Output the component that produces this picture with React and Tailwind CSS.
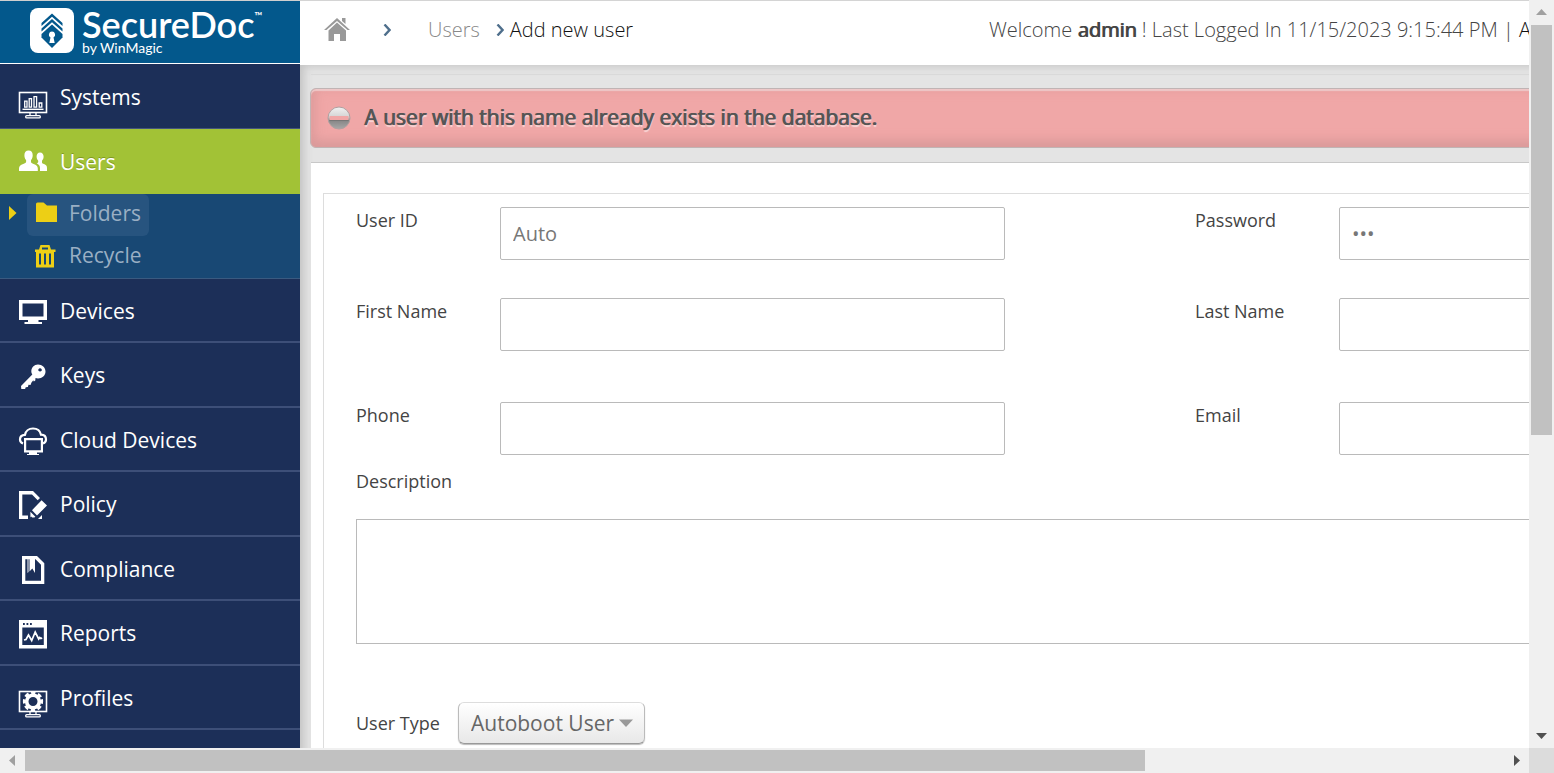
import React from "react";

const ink = { fill: "none", stroke: "#fff" };

function NavIcon({ children }) {
  return (
    <svg className="h-12 w-8 shrink-0" viewBox="0 0 32 48" fill="#fff" aria-hidden="true">
      {children}
    </svg>
  );
}

function MonitorThin() {
  return (
    <>
      <rect x="3.5" y="0.5" width="27" height="20" {...ink} strokeWidth="1.6" />
      <path d="M14 21v2.5M20 21v2.5" {...ink} strokeWidth="1.3" />
      <rect x="9.7" y="23.7" width="14.6" height="2.2" rx="1" {...ink} strokeWidth="1.3" />
    </>
  );
}

const icons = {
  systems: (
    <g transform="translate(0 20)">
      <MonitorThin />
      <path d="M6.5 17.3h21" {...ink} strokeWidth="1.4" />
      <path d="M8.7 15.2v-6h2.3v6zM13.2 15.2V6.7h2.3v8.500zM18 15.200V4.7h2.600v10.500zM23.200 15.200v-4.200h2.600v4.200z" {...ink} strokeWidth="1.3" />
    </g>
  ),
  users: (
    <path d="M12.600 12.500c2.800 0 4.100 1.900 4.100 4.700 0 2-.6 3.800-1.700 4.900v2c0 .8 1 1.200 2.600 1.900 2.800 1.200 4.200 2 4.200 4.500V33H3v-2.500c0-2.500 1.400-3.300 4.200-4.500 1.600-.7 2.900-1.100 2.900-1.900v-2c-1.100-1.100-1.700-2.900-1.700-4.900 0-2.800 1.400-4.700 4.200-4.700zM24 14.500c2.300 0 3.600 1.700 3.600 4.100 0 1.800-.6 3.200-1.600 4.100v1.700c0 .8.900 1.100 2 1.600 2.100 1 3 1.800 3 4V33h-7v-3c0-2.400-1.200-3.700-3.300-4.800.9-.5 1.500-.6 1.500-1.200v-1.300c-1-.9-1.600-2.300-1.600-4.100 0-2.400 1.200-4.100 3.400-4.100z" />
  ),
  devices: (
    <path fillRule="evenodd" d="M3 14h28v20h-8.500v2H26v2H8.500v-2H12v-2H3zM6.500 17.500v13h21v-13z" />
  ),
  keys: (
    <path fillRule="evenodd" d="M22 13.500c4.200 0 7.500 3 7.500 7s-3.300 7-7.500 7c-1 0-1.700-.1-2.500-.4l-.2 2.400-1.500 1-.5-1.200-1.800 2.200-1 2.600-2-.4-.6 2.300-2.200.3-.6 1.700H5.300L5 35l11.300-11.600c-.7-1-1-2-1-3 0-3.900 2.900-6.900 6.700-6.900zM24 17.300a1.800 1.600 0 1 0 .1 0z" />
  ),
  cloud: (
    <>
      <path d="M7 28.500c-1.900-.7-3-2-3-4 0-2.700 1.900-4.600 5-4.700.6-3.700 3.700-6.300 8-6.300s7.200 2.500 8 6.200c3.200.1 5 2 5 4.800 0 1.900-1.100 3.300-3 4" {...ink} strokeWidth="2.200" />
      <path fillRule="evenodd" d="M8 23h19v14.500h-6V39h2v1H11v-1h2v-1.500H8zM10.200 25.200v10.100h14.600V25.200z" />
    </>
  ),
  policy: (
    <>
      <path d="M3 12h14l7 7-2.300 2.300L16 15.500H6.300v21H12V40H3z" />
      <path d="M25.600 21.200 31 26.600 21 36.400l-5-5.200zM14.400 32.800l5 5-1.100.7h-2.200l-1-1.100-.7 1.200zM26 36v4h-4z" />
    </>
  ),
  compliance: (
    <>
      <path fillRule="evenodd" d="M6 12h15l7.300 7.300V40H6zM9.300 15.200v21.500H25V20.800l-5.500-5.600z" />
      <path d="M11.500 14v15l1-1V14zM13.500 14h5.500v15l-2.700-4.500-2.800 3z" />
    </>
  ),
  reports: (
    <>
      <path fillRule="evenodd" d="M3 12h28v28.500H3zM6.300 19.500V37H27.800V19.500zM7 15v2h1.800v-2zM10.500 15v2h1.800v-2zM14 15v2h1.800v-2z" />
      <path d="m8 32 2-.5 2.500-4.500 3.200 5.500 3.500-8.500 3.500 7 1-1.500 1.200 1 1.300-.5" {...ink} strokeWidth="1.700" />
    </>
  ),
  profiles: (
    <g transform="translate(0 18)">
      <MonitorThin />
      <circle cx="17" cy="10.500" r="6.300" {...ink} strokeWidth="3.600" />
      <circle cx="17" cy="10.500" r="8.700" {...ink} strokeWidth="3" strokeDasharray="4.200 2.633" transform="rotate(-14 17 10.500)" />
    </g>
  ),
};

const navItems = [
  ["devices", "Devices"],
  ["keys", "Keys"],
  ["cloud", "Cloud Devices"],
  ["policy", "Policy"],
  ["compliance", "Compliance"],
  ["reports", "Reports"],
  ["profiles", "Profiles"],
];

function Logo() {
  return (
    <a href="#home" className="flex h-16 items-start gap-2 border-t border-b border-t-[#cfcfcf] border-b-white bg-[#03588c] pl-[30px] pt-[7px] text-white">
      <svg className="h-[45px] w-11 shrink-0" viewBox="0 0 44 45" aria-hidden="true">
        <rect width="44" height="45" rx="8" fill="#fff" />
        <path d="M11.500 15 22 5.500 32.500 15v3L22 8.700 11.500 18z" fill="#03588c" />
        <path d="M11.500 20.500 22 11l10.500 9.500v3L22 14.200l-10.500 9.300z" fill="#03588c" />
        <path d="M11.500 26 22 16.500 32.500 26v3.500L22 40 11.500 29.500z" fill="#03588c" />
        <path d="M22 23.500a3.200 3.200 0 0 1 1.500 6L24.700 35h-5.400l1.200-5.500A3.200 3.200 0 0 1 22 23.500z" fill="#fff" />
      </svg>
      <span className="flex flex-col font-['Lato',sans-serif]">
        <span className="flex items-start text-[36px] leading-[32px] font-semibold">
          SecureDoc<span className="text-[11px] leading-4">™</span>
        </span>
        <span className="text-sm leading-4">by WinMagic</span>
      </span>
    </a>
  );
}

function Sidebar() {
  return (
    <aside className="w-[300px] shrink-0 bg-[#1c2f58] text-white">
      <Logo />
      <nav className="text-[21px]">
        <a href="#systems" className="flex h-[65px] items-center gap-3 border-b border-[#44557c] pl-4">
          <NavIcon>{icons.systems}</NavIcon>
          <span className="pt-1">Systems</span>
        </a>
        <a href="#users" className="flex h-[65px] items-center gap-3 bg-[#a2c236] pl-4 [text-shadow:0_-1px_0_#7f9a22]">
          <NavIcon>{icons.users}</NavIcon>
          <span className="pt-[2px]">Users</span>
        </a>
        <ul className="h-[85px] border-b border-[#3a5a80] bg-[#184874] text-[#9aafc4]">
          <li className="flex items-start gap-2">
            <svg className="mt-[11px] ml-2 h-4 w-[11px]" viewBox="0 0 11 16" aria-hidden="true">
              <path d="M1 1v14l7.500-7z" fill="#edcf15" />
            </svg>
            <a href="#folders" className="flex h-[42px] items-center gap-3 rounded-md bg-[#27547f] px-2 pb-[2px]">
              <svg className="-mt-1 h-5 w-[22px]" viewBox="0 0 22 20" aria-hidden="true">
                <path d="M1 2q0-1.500 1.500-1.500h6L12 3.500h10V20H1z" fill="#edcf15" />
              </svg>
              Folders
            </a>
          </li>
          <li>
            <a href="#recycle" className="flex h-[42px] items-center gap-3 pb-[2px] pl-[35px]">
              <svg className="h-6 w-[22px]" viewBox="0 0 22 24" fill="#edcf15" aria-hidden="true">
                <path fillRule="evenodd" d="M0 5.500h4L5.500 1h9L16 5.500h4.500V8H19v15.500H1V8H0zM7 3.500v2h6v-2zM4 9.500v11h2v-11zM9 9.500v11h2v-11zM14 9.500v11h2v-11z" />
              </svg>
              Recycle
            </a>
          </li>
        </ul>
        <ul className="grid h-[451px] auto-rows-fr">
          {navItems.map(([id, label]) => (
            <li key={id} className="border-b-2 border-[#3d4f78]">
              <a href={"#" + id} className="flex h-full items-center gap-3 pl-4">
                <NavIcon>{icons[id]}</NavIcon>
                <span className="pt-[3px]">{label}</span>
              </a>
            </li>
          ))}
        </ul>
      </nav>
    </aside>
  );
}

function Chevron() {
  return (
    <svg className="h-3 w-2" viewBox="0 0 8 12" aria-hidden="true">
      <path d="m1.500 0.500 5 5.500-5 5.500" fill="none" stroke="#4f6f8c" strokeWidth="2.400" />
    </svg>
  );
}

function TopBar() {
  return (
    <header className="flex h-[65px] items-center border-t border-[#d4d4d4] bg-white pb-[7px] pl-6 text-xl font-light whitespace-nowrap text-[#444]">
      <div className="flex w-[665px] items-center">
        <a href="#home" aria-label="Home">
          <svg className="h-[25px] w-[26px]" viewBox="0 0 26 25" fill="#999" aria-hidden="true">
            <path d="M13 1 26 13h-2.500L13 4 2.500 13H0z" />
            <path d="M18 1h3.500v6L18 4z" />
            <path d="M13 5.500 22 13.500V24h-6v-7h-6v7H4.500V13.500z" />
          </svg>
        </a>
        <span className="pl-[33px]"><Chevron /></span>
        <a href="#users" className="pl-[37px] text-[#888]">Users</a>
        <span className="pl-4"><Chevron /></span>
        <span className="pl-[6px] text-[#111]">Add new user</span>
      </div>
      <div>
        Welcome <b className="font-normal [text-shadow:1px_0_0_#444]">admin</b> ! Last Logged In 11/15/2023 9:15:44 PM |{" "}
        <a href="#about" className="text-[#111]">A</a>
      </div>
    </header>
  );
}

function Alert() {
  return (
    <div role="alert" className="mt-[13px] -ml-px flex h-[60px] items-center gap-[13px] rounded-md border border-[#c0b4b4] bg-[#f0a7a7] pl-4 text-[21px] text-[#555] shadow-[inset_0_2px_1px_#eec8c8,inset_0_-6px_12px_#d99a9a,inset_4px_0_12px_#e59f9f]">
      <svg className="h-6 w-6" viewBox="0 0 24 24" aria-hidden="true">
        <defs>
          <linearGradient id="stop" x2="0" y2="1">
            <stop stopColor="#f2f2f2" />
            <stop offset=".45" stopColor="#d4d4d4" />
            <stop offset=".6" stopColor="#858585" />
            <stop offset="1" stopColor="#a8a8a8" />
          </linearGradient>
        </defs>
        <circle cx="12" cy="12" r="11" fill="url(#stop)" stroke="#b0a0a0" />
        <path d="M2.500 10h19v4h-19z" fill="#f0a7a7" />
        <path d="M2.500 14.500h19" stroke="#777" />
      </svg>
      <span className="[text-shadow:1px_0_0_#555,1px_2px_1px_#f8dada]">A user with this name already exists in the database.</span>
    </div>
  );
}

function Field({ id, label, type = "text", value }) {
  return (
    <div className="flex items-start">
      <label htmlFor={id} className="w-36 leading-[26px]">{label}</label>
      <input
        id={id}
        type={type}
        defaultValue={value}
        className="h-[53px] w-[505px] rounded-xs border border-[#bababa] bg-white px-3 text-xl text-[#777]"
      />
    </div>
  );
}

function UserForm() {
  return (
    <form className="h-[700px] border-t border-[#c8c8c8] bg-white pt-[30px] pl-3">
      <div className="h-full border-t border-l border-[#ddd] pt-[13px] pl-8 text-lg text-[#444]">
        <div className="grid grid-cols-2">
          <div className="h-[91px]"><Field id="userid" label="User ID" value="Auto" /></div>
          <Field id="password" label="Password" type="password" value="abc" />
          <div className="h-[104px]"><Field id="first" label="First Name" /></div>
          <Field id="last" label="Last Name" />
          <Field id="phone" label="Phone" />
          <Field id="email" label="Email" />
        </div>
        <label htmlFor="description" className="mt-[13px] block leading-[26px]">Description</label>
        <textarea id="description" className="mt-[25px] block h-[125px] w-full resize-none border border-[#bababa] bg-white p-3" />
        <div className="mt-[58px] flex items-center">
          <label htmlFor="type" className="w-[102px]">User Type</label>
          <span className="relative flex items-center">
            <select id="type" className="h-[42px] w-[187px] appearance-none rounded-md border border-t-[#ddd] border-r-[#bbb] border-b-[#999] border-l-[#bbb] bg-linear-to-b from-white to-[#e8e8e8] pl-3 text-[21px] text-[#666] shadow-[0_1px_1px_#bbb]">
              <option>Autoboot User</option>
            </select>
            <svg className="pointer-events-none absolute right-3 h-2 w-[14px]" viewBox="0 0 14 8" aria-hidden="true">
              <path d="M0 .5h14L7 8z" fill="#999" />
            </svg>
          </span>
        </div>
      </div>
    </form>
  );
}

function Arrow({ d, label, className, color }) {
  return (
    <button type="button" aria-label={label} className={className}>
      <svg className="h-[11px] w-[11px]" viewBox="0 0 11 11" fill={color} aria-hidden="true">
        <path d={d} />
      </svg>
    </button>
  );
}

const arrowBox = "flex h-[25px] w-[25px] shrink-0 items-center justify-center";

export default function App() {
  return (
    <div className="grid h-screen grid-cols-[1fr_25px] grid-rows-[1fr_25px] overflow-hidden bg-white font-['Open_Sans',sans-serif]">
      <div className="min-h-0 min-w-0 overflow-hidden">
        <div className="flex min-w-[2034px]">
          <Sidebar />
          <div className="flex-1 bg-[#e4e4e4]">
            <TopBar />
            <main className="pl-[11px] shadow-[inset_8px_0_8px_-4px_#c4c4c4,inset_0_8px_8px_-6px_#ccc]">
              <div className="h-[10px] border-b border-[#d9d9d9]" />
              <Alert />
              <div className="mt-[14px]">
                <UserForm />
              </div>
            </main>
          </div>
        </div>
      </div>
      <div className="flex flex-col bg-[#f0f0f0]">
        <Arrow label="Scroll up" className={arrowBox} color="#a0a0a0" d="M0 8h11L5.500 2z" />
        <div className="flex min-h-0 flex-1 justify-center">
          <div className="h-[58.7%] w-[21px] bg-[#c1c1c1]" />
        </div>
        <Arrow label="Scroll down" className={arrowBox} color="#505050" d="M0 3h11L5.500 9z" />
      </div>
      <div className="flex items-center bg-[#f0f0f0]">
        <Arrow label="Scroll left" className={arrowBox} color="#a0a0a0" d="M8 0v11L2 5.500z" />
        <div className="min-w-0 flex-1">
          <div className="h-[21px] w-[75.7%] bg-[#c1c1c1]" />
        </div>
        <Arrow label="Scroll right" className={arrowBox} color="#505050" d="M3 0v11l6-5.500z" />
      </div>
      <div className="bg-[#dcdcdc]" />
    </div>
  );
}
